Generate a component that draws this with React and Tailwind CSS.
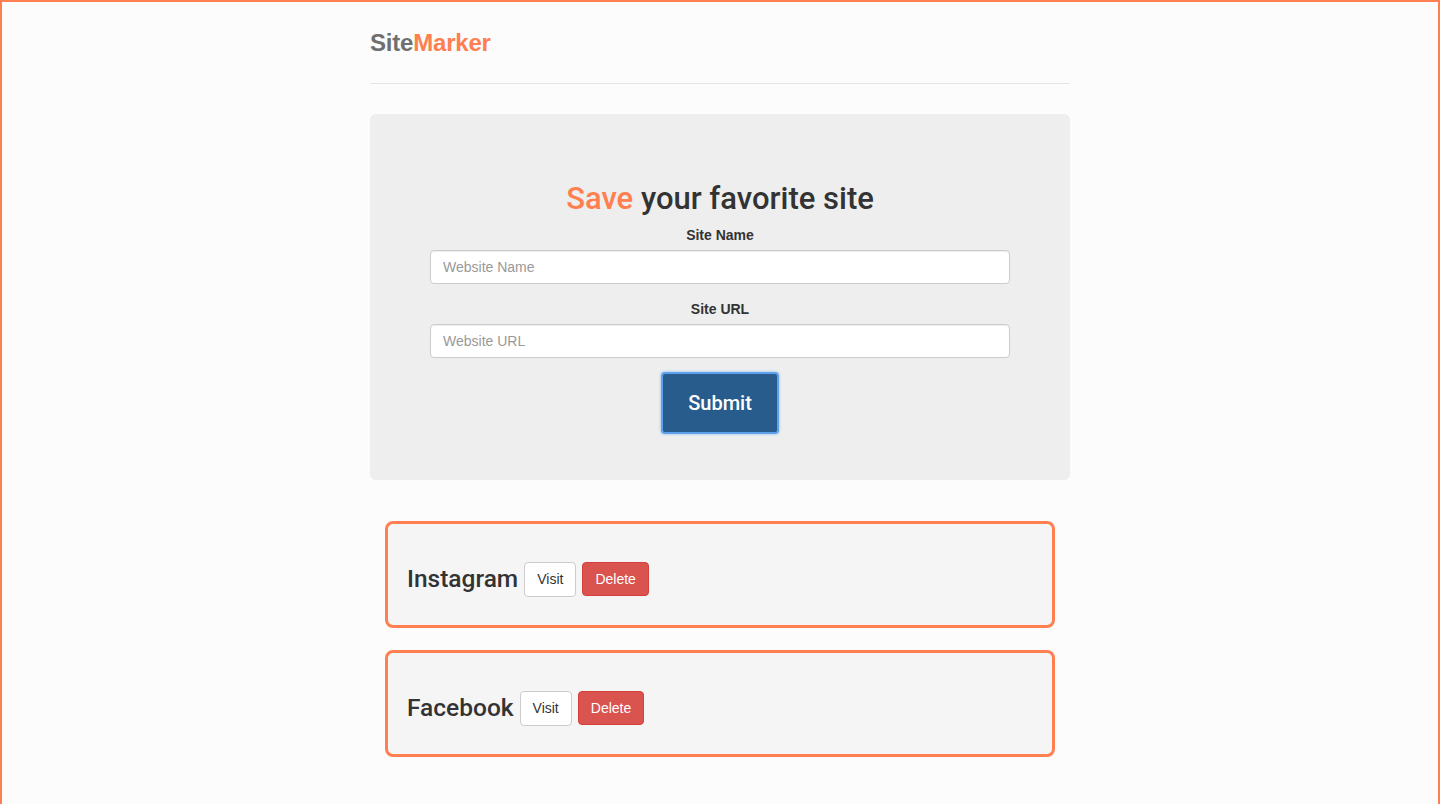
import React from "react";

const sites = [
  { name: "Instagram" },
  { name: "Facebook" },
];

function SiteCard({ name }) {
  return (
    <div className="mx-[15px] mb-[22px] flex h-[107px] items-center rounded-[8px] border-[3px] border-[#ff7f50] bg-[#f5f5f5] pl-[19px] pt-[9px]">
      <h3 className="font-['Roboto',Arial,sans-serif] text-[24.5px] font-medium leading-[1.1] text-[#333]">{name}</h3>
      <button className="ml-[6px] h-[35px] rounded-[4px] border border-[#ccc] bg-white px-[12px] text-[14px] text-[#333]">
        Visit
      </button>
      <button className="ml-[6px] h-[34px] rounded-[4px] border border-[#d43f3a] bg-[#d9534f] px-[12px] text-[14px] text-white">
        Delete
      </button>
    </div>
  );
}

export default function App() {
  return (
    <div
      className="min-h-[900px] border-x-2 border-t-2 border-[#ff7f50] bg-[#fcfcfc]"
      style={{ fontFamily: '"Liberation Sans", Arial, sans-serif' }}
    >
      <div className="mx-auto w-[700px]">
        {/* Header */}
        <div className="pt-[29px]">
          <h1 className="text-[24px] font-bold leading-[24px] tracking-[-0.2px]">
            <span className="text-[#6f6f6f]">Site</span>
            <span className="text-[#ff7f50]">Marker</span>
          </h1>
        </div>
        <hr className="mt-[28px] border-t border-[#e5e5e5]" />

        {/* Form panel */}
        <div className="mt-[30px] rounded-[6px] bg-[#eeeeee] px-[60px] pb-[46px] pt-[68px]">
          <h2 className="text-center font-['Roboto',Arial,sans-serif] text-[31px] font-medium leading-[33px] text-[#333]">
            <span className="text-[#ff7f50]">Save</span> your favorite site
          </h2>
          <form className="mt-[10px]" onSubmit={(e) => e.preventDefault()}>
            <label className="block text-center text-[14px] font-bold leading-[20px] text-[#333]">
              Site Name
            </label>
            <input
              type="text"
              placeholder="Website Name"
              className="mt-[5px] block h-[34px] w-full rounded-[4px] border border-[#ccc] bg-white px-[12px] text-[14px] text-[#555] shadow-[inset_0_1px_1px_rgba(0,0,0,0.075)] outline-none placeholder:text-[#999]"
            />
            <label className="mt-[15px] block text-center text-[14px] font-bold leading-[20px] text-[#333]">
              Site URL
            </label>
            <input
              type="text"
              placeholder="Website URL"
              className="mt-[5px] block h-[34px] w-full rounded-[4px] border border-[#ccc] bg-white px-[12px] text-[14px] text-[#555] shadow-[inset_0_1px_1px_rgba(0,0,0,0.075)] outline-none placeholder:text-[#999]"
            />
            <div className="mt-[14px] flex justify-center">
              <button
                type="submit"
                className="h-[62px] w-[118px] rounded-[4px] border-2 border-[#5fa0ea] bg-[#285c8c] font-['Roboto',Arial,sans-serif] text-[20px] font-medium text-white shadow-[0_0_3px_rgba(102,175,233,0.8)]"
              >
                Submit
              </button>
            </div>
          </form>
        </div>

        {/* Saved sites */}
        <div className="mt-[41px]">
          {sites.map((s) => (
            <SiteCard key={s.name} name={s.name} />
          ))}
        </div>
      </div>
    </div>
  );
}
